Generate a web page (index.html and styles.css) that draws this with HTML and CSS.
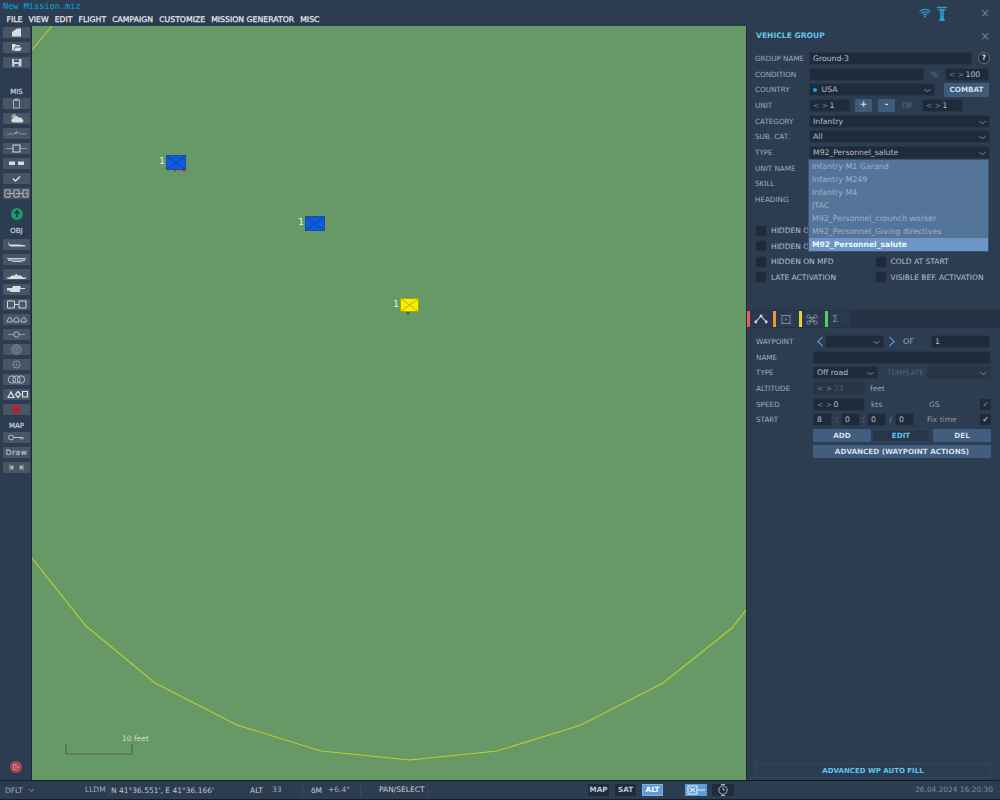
FILE: index.html
```html
<!DOCTYPE html>
<html lang="en">
<head>
<meta charset="utf-8">
<title>Mission Editor</title>
<link rel="stylesheet" href="styles.css">
</head>
<body>
<div class="app">
  <header class="top">
    <div class="titlebar">
      <span class="title">New Mission.miz</span>
      <div class="top-icons">
        <svg class="ico-wifi" width="12" height="10" viewBox="0 0 12 10"><path d="M.5 3.6a8 8 0 0 1 11 0M2.2 5.3a5.6 5.6 0 0 1 7.6 0M3.9 7a3.2 3.2 0 0 1 4.2 0" fill="none" stroke="#2f9bc4" stroke-width="1.3"/><circle cx="6" cy="8.6" r="1.1" fill="#2f9bc4"/></svg>
        <svg class="ico-tower" width="12" height="15" viewBox="0 0 12 15"><path d="M1 1.500h10M2.500 4h7M5 3v8.500h2V3M3.500 14.500h5" fill="none" stroke="#2f9bc4" stroke-width="1.600"/><path d="M3 14.500 5 10h2l2 4.500z" fill="#2f9bc4"/></svg>
        <span class="top-close">×</span>
      </div>
    </div>
    <nav class="menu">
      <span>FILE</span><span>VIEW</span><span>EDIT</span><span>FLIGHT</span><span>CAMPAIGN</span><span>CUSTOMIZE</span><span>MISSION GENERATOR</span><span>MISC</span>
    </nav>
  </header>

  <div class="main">
    <aside class="side">
      <div class="side-group g-file">
        <button class="tool"><svg viewBox="0 0 27 11"><path d="M14 1.500h4v8h-9V5z" fill="#d8dde2"/></svg></button>
        <button class="tool"><svg viewBox="0 0 27 11"><path d="M9 2h3l1 1h4v1.500h-5L10.500 8.500H9zM12.500 5.500H19L17 9H11z" fill="#d8dde2"/></svg></button>
        <button class="tool"><svg viewBox="0 0 27 11"><path d="M9 2h9.500v7.500H9z" fill="#c8ced4"/><path d="M11 2.500h5V5h-5zM11.500 7h4v2.500h-4z" fill="#4a5563"/></svg></button>
      </div>
      <div class="side-label l-mis">MIS</div>
      <div class="side-group">
        <button class="tool"><svg viewBox="0 0 27 11"><path d="M10.500 2h6v8h-6zM12 1h3v1.500h-3z" fill="none" stroke="#a9b2bb"/></svg></button>
        <button class="tool"><svg viewBox="0 0 27 11"><circle cx="11" cy="3.500" r="2.500" fill="#9aa3ad"/><path d="M10 9.500a2 2 0 0 1 .5-4 3 3 0 0 1 5.500-.8 2.400 2.400 0 0 1 3.500 1.800 1.600 1.600 0 0 1-.5 3z" fill="#d5dade"/></svg></button>
        <button class="tool"><svg viewBox="0 0 27 11"><path d="M4 6h7M11 6l3-2.500 3 2.500h6" fill="none" stroke="#8b95a0"/><circle cx="13" cy="5" r="1" fill="#b9c0c7"/></svg></button>
        <button class="tool"><svg viewBox="0 0 27 11"><path d="M3 5.500h7M17 5.500h7" stroke="#8b95a0"/><rect x="10" y="2" width="7" height="7" fill="none" stroke="#d0d5da"/></svg></button>
        <button class="tool"><svg viewBox="0 0 27 11"><path d="M6 3.500h6v3.500H6zM15 3.500h6v3.500h-6z" fill="#d8dde2"/></svg></button>
        <button class="tool"><svg viewBox="0 0 27 11"><path d="m10 5.500 2.500 2.500 4.500-4.500" fill="none" stroke="#e0e4e8" stroke-width="1.300"/></svg></button>
        <button class="tool"><svg viewBox="0 0 27 11"><path d="M2 2h5v7H2zM11 2h5v7h-5zM20 2h5v7h-5zM7 5.500h4M16 5.500h4M4 5.500h2M13 5.500h2M22 5.500h2" fill="none" stroke="#b5bcc4"/></svg></button>
      </div>
      <div class="go-circle"><svg width="12" height="12" viewBox="0 0 12 12"><circle cx="6" cy="6" r="6" fill="#1f9a62"/><path d="M6 9.500V3M3.500 5.500 6 3l2.500 2.500" fill="none" stroke="#16304a" stroke-width="1.400"/></svg></div>
      <div class="side-label l-obj">OBJ</div>
      <div class="side-group">
        <button class="tool"><svg viewBox="0 0 27 11"><path d="M5 2.500 7 5.500h9l7 1-1 1H8l-2-1z" fill="#d8dde2"/></svg></button>
        <button class="tool"><svg viewBox="0 0 27 11"><path d="M4 4.500h19M5 6h3l2 1.500h8l4-1.500H8z" fill="none" stroke="#c5cbd1"/></svg></button>
        <button class="tool"><svg viewBox="0 0 27 11"><path d="M3 8.500h21l-2 1.500H5zM6 8.500l3-2h3l1-2 2 2h3l2 2z" fill="#d8dde2"/></svg></button>
        <button class="tool"><svg viewBox="0 0 27 11"><path d="M4 4h5l1-2h7l1 2h4v1h-5v3H8L6 6.500H4z" fill="#d8dde2"/></svg></button>
        <button class="tool"><svg viewBox="0 0 27 11"><path d="M4.500 2h7v7h-7zM16 2h7v7h-7zM11.500 5.500H16" fill="none" stroke="#d0d5da"/></svg></button>
        <button class="tool"><svg viewBox="0 0 27 11"><path d="M4 8h5V6L7 3 5 5zM11 8h5V5l-2.500-2L11 5zM18 8h5V6l-2-3-2 2z" fill="none" stroke="#b5bcc4"/></svg></button>
        <button class="tool"><svg viewBox="0 0 27 11"><path d="M5 5.500h6M16 5.500h6" stroke="#8b95a0"/><circle cx="13.500" cy="5.500" r="2.700" fill="none" stroke="#b5bcc4"/></svg></button>
        <button class="tool"><svg viewBox="0 0 27 11"><circle cx="13.500" cy="5.500" r="4.800" fill="none" stroke="#8b95a0"/><circle cx="13.500" cy="5.500" r="2.800" fill="none" stroke="#8b95a0"/><circle cx="13.500" cy="5.500" r="1" fill="#8b95a0"/></svg></button>
        <button class="tool"><svg viewBox="0 0 27 11"><circle cx="13.500" cy="5.500" r="3.500" fill="none" stroke="#8b95a0"/><circle cx="13.500" cy="5.500" r="1" fill="#8b95a0"/></svg></button>
        <button class="tool"><svg viewBox="0 0 27 11"><circle cx="9" cy="5.500" r="3.700" fill="none" stroke="#b5bcc4"/><circle cx="13.500" cy="5.500" r="3.700" fill="none" stroke="#b5bcc4"/><circle cx="18" cy="5.500" r="3.700" fill="none" stroke="#b5bcc4"/></svg></button>
        <button class="tool"><svg viewBox="0 0 27 11"><path d="m5 8.500 3-5.500 3 5.500zM15 2.500l2.500 3-2.500 3-2.500-3zM19.500 2.500h5v5.500h-5z" fill="none" stroke="#e0e4e8" stroke-width="1.200"/></svg></button>
        <button class="tool"><svg viewBox="0 0 27 11"><path d="m10 2 7 7M17 2l-7 7" stroke="#d4101a" stroke-width="2.400"/></svg></button>
      </div>
      <div class="side-label l-map">MAP</div>
      <div class="side-group">
        <button class="tool"><svg viewBox="0 0 27 11"><circle cx="8" cy="5.500" r="2.500" fill="none" stroke="#b5bcc4"/><path d="M10.500 5.500H20M18 5.500v2M20 5.500v2" stroke="#b5bcc4"/></svg></button>
        <button class="tool tool-text">Draw</button>
        <button class="tool"><svg viewBox="0 0 27 11"><path d="M7 2.500v6M20 2.500v6M7 5.500l3-2v4zM20 5.500l-3-2v4z" fill="#b5bcc4" stroke="#b5bcc4" stroke-width=".7"/></svg></button>
      </div>
      <div class="exit"><svg width="12" height="12" viewBox="0 0 12 12"><circle cx="6" cy="6" r="6" fill="#a94a4f"/><path d="M6.500 3.500H3.500v5h3M5 6h4M7.500 4.500 9 6 7.500 7.500" fill="none" stroke="#d9888b"/></svg></div>
    </aside>

    <section class="map">
      <svg class="map-lines" width="714" height="754" viewBox="0 0 714 754">
        <path d="M20 0 0 24M0 532 54 600 123 657 205 699 289 725 378 734 465 725 549 699 631 657 700 602 714 584" fill="none" stroke="#bcd02c" stroke-width="1.100"/>
        <path d="M34 718v10h66v-10" fill="none" stroke="#5b6358" stroke-width="1.200"/>
      </svg>
      <span class="scale-text">10 feet</span>

      <div class="unit u1"><span class="unit-n">1</span>
        <svg class="unit-mark" width="24" height="18" viewBox="0 0 24 18"><path d="M8 15.500q4 1.500 9 0l4-.5 1-3" fill="none" stroke="#b3705e" stroke-width="1.200"/><circle cx="18" cy="15.500" r="1" fill="#4d3a3c"/><circle cx="9" cy="16" r=".9" fill="#6d4a4c"/><path d="M.5 .5h19v14H.5z" fill="#0a5ce6" stroke="#1e4f96"/><path d="m.5 .5 19 14M19.500 .5l-19 14" stroke="#143d82" stroke-width=".8"/></svg>
      </div>
      <div class="unit u2"><span class="unit-n">1</span>
        <svg class="unit-mark" width="20" height="15" viewBox="0 0 20 15"><path d="M.5 .5h19v14H.5z" fill="#0a5ce6" stroke="#1e4f96"/><path d="m.5 .5 19 14M19.500 .5l-19 14" stroke="#143d82" stroke-width=".8"/></svg>
      </div>
      <div class="unit u3"><span class="unit-n">1</span>
        <svg class="unit-mark" width="20" height="17" viewBox="0 0 20 17"><circle cx="8" cy="15.500" r="1.300" fill="#4d4a3c"/><path d="M.5 .5h18v13H.5z" fill="#f7f000" stroke="#a8a30f"/><path d="m.5 .5 18 13M18.500 .5l-18 13" stroke="#a8a30f" stroke-width=".8"/></svg>
      </div>
    </section>

    <aside class="panel">
      <div class="panel-top">
        <div class="panel-head"><span class="panel-title">VEHICLE GROUP</span><span class="panel-close">×</span></div>
        <div class="form">
          <div class="row"><label>GROUP NAME</label><div class="field w-name">Ground-3</div><span class="help">?</span></div>
          <div class="row"><label>CONDITION</label><div class="field w-cond"></div><span class="pct">%</span><div class="field spin w-pct"><i>&lt; &gt;</i>100</div></div>
          <div class="row"><label>COUNTRY</label><div class="field select w-country"><b class="dot"></b>USA<em></em></div><button class="btn combat">COMBAT</button></div>
          <div class="row"><label>UNIT</label><div class="field spin w-unit"><i>&lt; &gt;</i>1</div><button class="btn pm plus">+</button><button class="btn pm">-</button><span class="of">OF</span><div class="field spin w-unit"><i>&lt; &gt;</i>1</div></div>
          <div class="row"><label>CATEGORY</label><div class="field select grow">Infantry<em></em></div></div>
          <div class="row"><label>SUB. CAT.</label><div class="field select grow">All<em></em></div></div>
          <div class="row"><label>TYPE</label><div class="field select grow">M92_Personnel_salute<em></em></div></div>
          <div class="row"><label>UNIT NAME</label></div>
          <div class="row"><label>SKILL</label></div>
          <div class="row"><label>HEADING</label></div>
        </div>
        <div class="checks">
          <div class="check-row"><div class="check"><b></b>HIDDEN ON PLANNER</div></div>
          <div class="check-row"><div class="check"><b></b>HIDDEN ON F10 MAP</div></div>
          <div class="check-row"><div class="check"><b></b>HIDDEN ON MFD</div><div class="check"><b></b>COLD AT START</div></div>
          <div class="check-row"><div class="check"><b></b>LATE ACTIVATION</div><div class="check"><b></b>VISIBLE BEF. ACTIVATION</div></div>
        </div>
        <ul class="dropdown">
          <li>Infantry M1 Garand</li>
          <li>Infantry M249</li>
          <li>Infantry M4</li>
          <li>JTAC</li>
          <li>M92_Personnel_crounch worker</li>
          <li>M92_Personnel_Giving directives</li>
          <li class="sel">M92_Personnel_salute</li>
        </ul>
      </div>

      <div class="tabs">
        <div class="tab t-red"><svg width="14" height="10" viewBox="0 0 14 10"><path d="M1.500 8 7 2l5.500 6" fill="none" stroke="#d5dade" stroke-width="1.100"/><g fill="#d5dade"><circle cx="1.800" cy="8" r="1.400"/><circle cx="7" cy="2" r="1.400"/><circle cx="12.200" cy="8" r="1.400"/></g></svg></div>
        <div class="tab t-orange"><svg width="12" height="11" viewBox="0 0 12 11"><path d="M2 1.500h8v8H2zM1 .5l2 2M11 .5l-2 2M1 10.500l2-2M11 10.500l-2-2" fill="none" stroke="#7c8896"/><circle cx="6" cy="5.500" r="1" fill="#7c8896"/></svg></div>
        <div class="tab t-yellow"><svg width="12" height="11" viewBox="0 0 12 11"><path d="M3 3.500h6M3 7.500h6M3 3.500l6 4M9 3.500l-6 4" fill="none" stroke="#7c8896"/><circle cx="2.500" cy="2.500" r="1.700" fill="none" stroke="#7c8896"/><circle cx="9.500" cy="2.500" r="1.700" fill="none" stroke="#7c8896"/><circle cx="2.500" cy="8.500" r="1.700" fill="none" stroke="#7c8896"/><circle cx="9.500" cy="8.500" r="1.700" fill="none" stroke="#7c8896"/></svg></div>
        <div class="tab t-green"><span class="sigma">Σ</span></div>
      </div>

      <div class="panel-bottom">
        <div class="form form-wp">
          <div class="row"><label>WAYPOINT</label><svg class="chev chev-l" width="8" height="11" viewBox="0 0 8 11"><path d="M6.500 1 2 5.500 6.500 10" fill="none" stroke="#4f8fc7" stroke-width="1.500"/></svg><div class="field select w-wp"><em></em></div><svg class="chev chev-r" width="8" height="11" viewBox="0 0 8 11"><path d="M1.500 1 6 5.500 1.500 10" fill="none" stroke="#4f8fc7" stroke-width="1.500"/></svg><span class="wp-of">OF</span><div class="field w-wpn">1</div></div>
          <div class="row"><label>NAME</label><div class="field grow"></div></div>
          <div class="row"><label>TYPE</label><div class="field select w-type">Off road<em></em></div><span class="tmpl">TEMPLATE</span><div class="field select w-tmpl off"><em></em></div></div>
          <div class="row"><label>ALTITUDE</label><div class="field spin w-alt off"><i>&lt; &gt;</i>33</div><span class="unit-label">feet</span></div>
          <div class="row"><label>SPEED</label><div class="field spin w-alt"><i>&lt; &gt;</i>0</div><span class="unit-label kts">kts</span><span class="gs">GS</span><span class="tick">✓</span></div>
          <div class="row"><label>START</label><div class="times"><div class="field t">8</div><span>:</span><div class="field t">0</div><span>:</span><div class="field t">0</div><span>/</span><div class="field t">0</div></div><span class="fix">Fix time</span><span class="tick on">✓</span></div>
          <div class="wp-actions">
            <button class="btn act">ADD</button>
            <button class="btn act active">EDIT</button>
            <button class="btn act del">DEL</button>
          </div>
          <button class="btn adv">ADVANCED (WAYPOINT ACTIONS)</button>
        </div>
        <button class="autofill">ADVANCED WP AUTO FILL</button>
      </div>
    </aside>
  </div>

  <footer class="status">
    <span class="s-dflt">DFLT</span><svg class="s-caret" width="7" height="5" viewBox="0 0 7 5"><path d="m1 1 2.500 2.500L6 1" fill="none" stroke="#8795a5"/></svg>
    <span class="s-lldm">LLDM</span>
    <span class="s-coord">N 41°36.551', E 41°36.166'</span>
    <span class="s-alt">ALT</span><span class="s-altv">33</span>
    <span class="s-dm">δM</span><span class="s-dmv">+6.4°</span>
    <span class="s-pan">PAN/SELECT</span>
    <div class="s-modes"><span>MAP</span><span>SAT</span><span class="on">ALT</span></div>
    <div class="s-ic on"><svg width="20" height="10" viewBox="0 0 20 10"><path d="M2 1h9v8H2zM4 3l5 4M9 3l-5 4M11 5h8" fill="none" stroke="#e6eef6" stroke-width="1.100"/></svg></div>
    <div class="s-ic"><svg width="12" height="12" viewBox="0 0 12 12"><circle cx="6" cy="6" r="4.200" fill="none" stroke="#aab4be"/><path d="M6 3.500V6h2M4 .5h4M4 11.500h4" fill="none" stroke="#aab4be"/></svg></div>
    <span class="s-date">26.04.2024 16:20:30</span>
  </footer>
</div>
</body>
</html>
```

FILE: styles.css
```css
* { box-sizing: border-box; }
html, body { margin: 0; padding: 0; }
body { width: 1000px; height: 800px; overflow: hidden; font-family: "DejaVu Sans", sans-serif; font-size: 7.500px; color: #a7b2bf; background: #2b3b50; text-rendering: geometricPrecision; }
button { font-family: inherit; border: 0; padding: 0; margin: 0; text-rendering: geometricPrecision; }
.app { width: 1000px; height: 800px; display: flex; flex-direction: column; }

/* top */
.top { height: 26px; background: #2c3c51; flex: none; }
.titlebar { height: 13px; display: flex; align-items: center; justify-content: space-between; padding-left: 3px; }
.title { font-family: "DejaVu Sans Mono", monospace; font-size: 8.600px; color: #0f9ad0; -webkit-text-stroke: .15px #0f9ad0; }
.top-icons { display: flex; align-items: center; height: 13px; padding-right: 10px; margin-top: 13px; }
.ico-wifi { margin-right: 5px; }
.ico-tower { margin-right: 32px; }
.top-close { color: #6f7f90; font-size: 12px; line-height: 1; }
.menu { height: 13px; display: flex; gap: 6px; padding-left: 6.500px; align-items: center; color: #e6eaee; font-size: 7.750px; -webkit-text-stroke: .25px #e6eaee; }

.main { flex: 1; display: flex; min-height: 0; }

/* left tools */
.side { width: 32px; flex: none; background: #2c3c51; border-right: 1px solid #1e2a39; padding: 1px 0 0 3px; position: relative; display: flex; flex-direction: column; }
.side-group { display: flex; flex-direction: column; gap: 4px; }
.tool { display: block; width: 27px; height: 11px; background: #4a5563; border-radius: 1px; color: #b8bfc7; font-size: 7.500px; line-height: 11px; letter-spacing: .5px; text-align: center; -webkit-text-stroke: .2px #b8bfc7; }
.tool svg { display: block; width: 27px; height: 11px; }
.side-label { width: 27px; text-align: center; font-size: 7px; color: #cfd6de; line-height: 9px; -webkit-text-stroke: .2px #cfd6de; }
.l-mis { margin-top: 20px; margin-bottom: 1px; }
.l-obj { margin-top: 7px; margin-bottom: 3px; }
.l-map { margin-top: 7px; margin-bottom: 1px; }
.go-circle { width: 27px; height: 12px; display: flex; justify-content: center; margin-top: 9px; }
.exit { position: absolute; left: 10px; bottom: 7px; width: 12px; height: 12px; }

/* map */
.map { width: 714px; flex: none; background: #669966; position: relative; overflow: hidden; }
.map-lines { position: absolute; left: 0; top: 0; }
.scale-text { position: absolute; left: 90px; top: 708px; color: #d5ddd0; font-size: 7.500px; }
.unit { position: absolute; display: flex; align-items: flex-start; }
.unit-n { position: absolute; right: 100%; top: 0; margin-right: 1px; color: #e8efe6; font-size: 9.500px; line-height: 14px; }
.unit-mark { display: block; }
.u1 { left: 134px; top: 129px; }
.u2 { left: 273px; top: 190px; }
.u3 { left: 368px; top: 272px; }

/* right panel */
.panel { width: 254px; flex: none; background: #2c3c51; border-left: 1px solid #1e2a39; display: flex; flex-direction: column; position: relative; }
.panel-top { height: 284px; flex: none; position: relative; }
.panel-head { height: 20px; display: flex; align-items: center; justify-content: space-between; padding: 0 10px 0 9px; border-bottom: 1px solid #27364a; }
.panel-title { font-size: 7.600px; font-weight: 700; color: #62c6e6; }
.panel-close { color: #6f7f90; font-size: 12px; line-height: 1; }
.form { padding: 4.500px 10px 0 8px; display: flex; flex-direction: column; }
.row { height: 15.700px; display: flex; align-items: center; flex: none; }
.row label { width: 54px; flex: none; font-size: 7.200px; color: #a2adba; white-space: nowrap; }
.field { height: 13px; background: #1f2b3b; border: 1px solid #263548; color: #b6bfca; font-size: 7.700px; line-height: 11px; padding-left: 3px; position: relative; white-space: nowrap; flex: none; }
.field i { font-style: normal; color: #6f7d8c; display: inline-block; width: 16.500px; font-size: 7.500px; }
.field.grow { flex: 1; min-width: 0; }
.field.off { background: #273547; color: #4f5d6d; }
.select em { position: absolute; right: 4px; top: 3px; width: 5px; height: 5px; border-right: 1px solid #74818f; border-bottom: 1px solid #74818f; transform: scale(1, .7) rotate(45deg); }
.w-name { width: 163px; }
.help { width: 12px; height: 12px; border-radius: 50%; border: 1px solid #5c6b7b; background: #1f2b3b; color: #d0d6dc; font-size: 7.500px; font-weight: 700; text-align: center; line-height: 10px; margin-left: 6px; }
.w-cond { width: 115px; }
.pct { width: 21px; text-align: center; color: #6f7d8c; }
.w-pct { width: 44px; }
.w-country { width: 126px; padding-left: 11.500px; }
.dot { position: absolute; left: 3px; top: 4px; width: 4px; height: 4px; border-radius: 50%; background: #12a6ee; }
.btn { background: #3f5b7c; color: #d6dde5; font-weight: 700; font-size: 7.200px; height: 13px; border-radius: 1px; flex: none; }
.combat { width: 45px; margin-left: 9px; height: 14px; }
.w-unit { width: 41px; }
.pm { width: 17px; margin-right: 6px; font-size: 9px; line-height: 11px; }
.plus { margin-left: 5px; }
.of { color: #667585; font-size: 7.500px; margin-left: 1px; width: 20px; }

.dropdown { list-style: none; margin: 0; padding: 0; position: absolute; left: 61px; top: 133px; width: 181px; background: #55749a; border: 1px solid #3b5472; }
.dropdown li { height: 13px; line-height: 13px; padding-left: 3px; color: #9fb1c5; font-size: 7.900px; }
.dropdown .sel { background: #6b96c5; color: #f2f6fa; font-weight: 700; font-size: 7.600px; }

.checks { position: absolute; left: 8px; top: 197px; display: flex; flex-direction: column; }
.check-row { height: 15.500px; display: flex; align-items: center; }
.check { width: 119.500px; display: flex; align-items: center; font-size: 7.500px; color: #b6c0cc; white-space: nowrap; }
.check b { width: 12px; height: 12px; background: #1f2b3b; border: 1px solid #2a394c; margin-right: 4px; flex: none; }

.tabs { height: 18px; flex: none; background: #253345; display: flex; }
.tab { width: 26px; height: 16px; background: #2a394d; border-left: 3px solid; display: flex; align-items: center; padding-left: 4px; margin-top: 1px; }
.t-red { border-left-color: #f05a5f; }
.t-orange { border-left-color: #e79a35; }
.t-yellow { border-left-color: #e3d431; }
.t-green { border-left-color: #4fd162; }
.sigma { color: #7c8896; font-size: 10px; }

.panel-bottom { flex: 1; position: relative; display: flex; flex-direction: column; }
.form-wp { padding: 5.500px 9px 0 9px; }
.form-wp .row label { width: 57px; }
.chev { flex: none; }
.chev-l { margin: 0 1px 0 3px; }
.chev-r { margin: 0 0 0 4px; }
.w-wp { width: 59px; }
.wp-of { margin-left: 7px; width: 28px; font-size: 7.800px; color: #98a4b2; flex: none; }
.w-wpn { width: 59px; }
.w-type { width: 65px; }
.tmpl { margin-left: 9px; width: 40px; color: #566474; font-size: 7.200px; flex: none; }
.w-tmpl { width: 64px; }
.w-alt { width: 52px; }
.unit-label { margin-left: 5px; color: #98a4b2; font-size: 7.500px; width: 24px; flex: none; }
.kts { margin-left: 6px; }
.gs { margin-left: 34px; width: 51px; font-size: 7.500px; color: #98a4b2; flex: none; }
.tick { width: 11px; height: 11px; background: #1f2b3b; color: #8c97a3; font-size: 8px; text-align: center; line-height: 11px; flex: none; }
.tick.on { color: #e2e6ea; }
.times { display: flex; align-items: center; flex: none; width: 101px; }
.times span { width: 9px; text-align: center; color: #8c97a3; }
.times span:nth-of-type(2) { width: 7px; }
.field.t { width: 19px; }
.fix { margin-left: 13px; width: 53px; color: #8c97a3; font-size: 7.500px; flex: none; }
.wp-actions { display: flex; height: 13px; margin: 1px 0 0 57px; gap: 1px; }
.act { width: 58px; background: #415e80; }
.active { background: #26374b; border: 1px solid #31445a; color: #62c6e6; }
.del { margin-left: 2px; }
.adv { margin: 3px 0 0 57px; width: 178px; background: #415e80; }
.autofill { position: absolute; left: 8px; bottom: 2px; width: 236px; height: 15px; background: #2a3d55; border: 1px solid #33485f; color: #5fc5e6; font-weight: 700; font-size: 7px; }

/* status */
.status { height: 20px; flex: none; background: #2c3c51; border-top: 1px solid #141c26; border-bottom: 1px solid #141c26; display: flex; align-items: center; font-size: 7.500px; color: #a2adba; position: relative; }
.s-dflt { margin-left: 5px; width: 18px; flex: none; }
.s-caret { margin-left: 5px; flex: none; }
.s-lldm { margin-left: 50px; width: 24px; border-right: 1px solid #3a4a5e; line-height: 14px; flex: none; }
.s-coord { margin-left: 2px; width: 139px; color: #c0c8d2; flex: none; }
.s-alt { width: 22px; color: #c8d0d8; flex: none; }
.s-altv { width: 31px; border-right: 1px solid #3a4a5e; line-height: 14px; flex: none; }
.s-dm { margin-left: 8px; width: 17px; color: #c8d0d8; flex: none; }
.s-dmv { width: 33px; border-right: 1px solid #3a4a5e; line-height: 14px; flex: none; }
.s-pan { margin-left: 18px; width: 49px; color: #c8d0d8; border-right: 1px solid #3a4a5e; line-height: 14px; flex: none; }
.s-modes { display: flex; gap: 6px; margin-left: 160px; flex: none; }
.s-modes span { width: 21px; height: 12px; line-height: 12px; text-align: center; background: #1f2b3b; color: #c0c8d2; font-weight: 700; font-size: 7.200px; }
.s-modes .on { background: #5f9bd8; color: #fff; border: 1px solid #7ab2e8; line-height: 10px; }
.s-ic { width: 22px; height: 12px; display: flex; align-items: center; justify-content: center; background: #1f2b3b; margin-left: 5px; flex: none; }
.s-modes + .s-ic { margin-left: 22px; }
.s-ic.on { background: #5f9bd8; }
.s-date { position: absolute; right: 7px; top: 4px; color: #7f8c9a; font-size: 7.400px; }
```
